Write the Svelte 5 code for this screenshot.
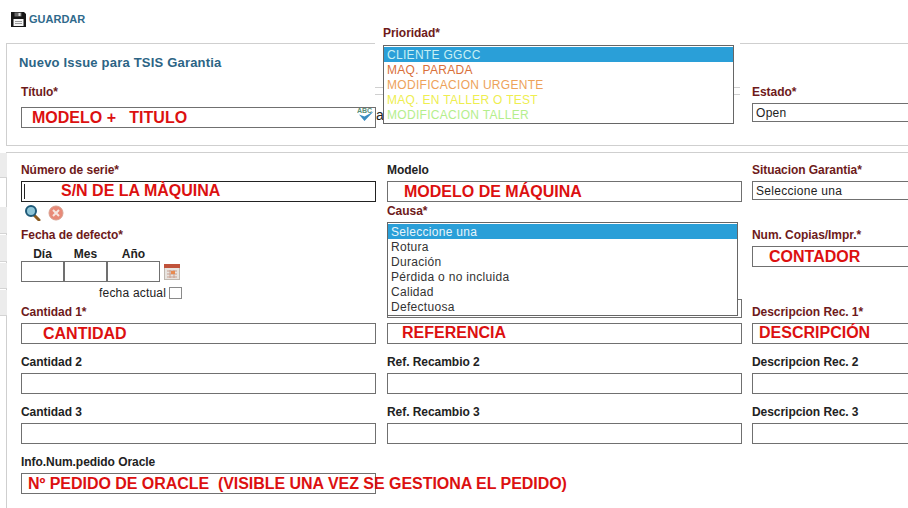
<script>
	const causas = ['Seleccione una', 'Rotura', 'Duración', 'Pérdida o no incluida', 'Calidad', 'Defectuosa'];
	const prioridades = [
		{ name: 'CLIENTE GGCC', color: '#c8f0f4' },
		{ name: 'MAQ. PARADA', color: '#d9703a' },
		{ name: 'MODIFICACION URGENTE', color: '#eda25a' },
		{ name: 'MAQ. EN TALLER O TEST', color: '#eeee50' },
		{ name: 'MODIFICACION TALLER', color: '#b4ee8c' }
	];
	const extras = [
		['Cantidad 2', 'Ref. Recambio 2', 'Descripcion Rec. 2'],
		['Cantidad 3', 'Ref. Recambio 3', 'Descripcion Rec. 3']
	];
</script>

<div class="page">
	<div class="toolbar">
		<svg width="15" height="15" viewBox="0 0 15 15">
			<path d="M0 0h13l2 2v13H0z" fill="#161616" />
			<rect x="3.500" y="0.500" width="7" height="4" fill="#666" />
			<rect x="7.500" y="1" width="2" height="3" fill="#ddd" />
			<rect x="2.500" y="7" width="10" height="7" fill="#f4f4f4" />
			<path d="M4 9.500h7M4 11.500h7" stroke="#999" />
		</svg>
		<span>GUARDAR</span>
	</div>

	<div class="panel top">
		<h2>Nuevo Issue para TSIS Garantia</h2>
		<div class="grid">
			<div class="col">
				<span class="lbl req">Título*</span>
				<div class="box note titulo"><b class="n1">MODELO + &nbsp; TITULO</b></div>
				<div class="spell">
					<svg width="17" height="15" viewBox="0 0 17 15">
						<text x="0" y="6" font-size="7" font-weight="700" font-family="Liberation Sans" fill="#5c9078">ABC</text>
						<path d="M2 7.500l5.500 6.500 9-9.500-9 5z" fill="#3a8cc0" />
					</svg>
					<span>a</span>
				</div>
			</div>
			<div></div>
			<div class="col">
				<span class="lbl req">Estado*</span>
				<div class="box sel">Open</div>
			</div>
		</div>
		<i class="mid-lines"></i>
		<div class="prio-pop">
			<span class="lbl req high">Prioridad*</span>
			<ul class="list prio">
				{#each prioridades as p, i}
					<li class:on={i === 0} style="color: {p.color}">{p.name}</li>
				{/each}
			</ul>
		</div>
	</div>

	<div class="panel main">
		<div class="grid first">
			<div class="col">
				<span class="lbl req high">Número de serie*</span>
				<div class="box dark note"><i class="caret"></i><b class="n2">S/N DE LA MÀQUINA</b></div>
				<div class="icons">
					<svg width="18" height="16" viewBox="0 0 18 16">
						<path d="M10 10l5 5" stroke="#8a5a20" stroke-width="3" stroke-linecap="round" />
						<circle cx="7" cy="6" r="5" fill="#8fc6d8" stroke="#1f5a78" stroke-width="2" />
					</svg>
					<svg width="16" height="16" viewBox="0 0 16 16">
						<circle cx="8" cy="8" r="7" fill="#e88a78" stroke="#d9a090" />
						<path d="M5 5l6 6M11 5l-6 6" stroke="#f6e6e0" stroke-width="2" />
					</svg>
				</div>
				<span class="lbl req fecha">Fecha de defecto*</span>
				<div class="date-heads">
					<span>Día</span><span>Mes</span><span>Año</span>
				</div>
				<div class="date-row">
					<div class="box d1"></div>
					<div class="box d2"></div>
					<div class="box d3"></div>
					<svg width="16" height="16" viewBox="0 0 16 16">
						<rect x="0.500" y="0.500" width="15" height="15" fill="#e8e4e0" stroke="#c0b8b0" />
						<rect width="16" height="4" fill="#c0523a" />
						<path d="M3 7h10M3 10h10M3 13h10M6 6v8M10 6v8" stroke="#c9a090" />
						<rect x="7" y="7" width="4" height="3" fill="#e88a50" />
					</svg>
				</div>
				<div class="today"><span>fecha actual</span><i class="check"></i></div>
			</div>
			<div class="col">
				<span class="lbl high">Modelo</span>
				<div class="box note"><b class="n3">MODELO DE MÁQUINA</b></div>
				<span class="lbl req high causa">Causa*</span>
				<ul class="list causas">
					{#each causas as c, i}
						<li class:on={i === 0}>{c}</li>
					{/each}
				</ul>
				<i class="box behind"></i>
			</div>
			<div class="col">
				<span class="lbl req high">Situacion Garantia*</span>
				<div class="box sel sit">Seleccione una</div>
				<span class="lbl req copias">Num. Copias/Impr.*</span>
				<div class="box note gap4"><b class="n4">CONTADOR</b></div>
			</div>
		</div>

		<div class="grid">
			<div class="col">
				<span class="lbl req">Cantidad 1*</span>
				<div class="box note gap4"><b class="n5">CANTIDAD</b></div>
			</div>
			<div class="col">
				<span class="lbl req">&nbsp;</span>
				<div class="box note gap4"><b class="n6">REFERENCIA</b></div>
			</div>
			<div class="col">
				<span class="lbl req">Descripcion Rec. 1*</span>
				<div class="box note gap4"><b class="n7">DESCRIPCIÓN</b></div>
			</div>
		</div>

		{#each extras as row}
			<div class="grid row-n">
				{#each row as label}
					<div class="col">
						<span class="lbl">{label}</span>
						<div class="box gap4"></div>
					</div>
				{/each}
			</div>
		{/each}

		<div class="grid row-n">
			<div class="col">
				<span class="lbl">Info.Num.pedido Oracle</span>
				<div class="box note gap4"><b class="n8">Nº PEDIDO DE ORACLE &nbsp;(VISIBLE UNA VEZ SE GESTIONA EL PEDIDO)</b></div>
			</div>
		</div>
	</div>

	<div class="tabs">
		<i class="t1"></i><i class="t2"></i><i class="t3"></i><i class="t4"></i><i class="t5"></i>
	</div>
</div>

<style>
	:global(body) {
		margin: 0;
		background: #fff;
		overflow: hidden;
	}

	.page {
		position: relative;
		width: 908px;
		height: 508px;
		overflow: hidden;
		font-family: 'Liberation Sans', Arial, sans-serif;
		font-size: 12px;
		color: #222;
	}

	.toolbar {
		display: flex;
		align-items: center;
		gap: 3px;
		height: 16px;
		padding: 11px 0 0 11px;
		color: #2f6a8c;
		font-size: 11px;
		font-weight: 700;
	}

	.panel {
		position: relative;
		box-sizing: border-box;
		margin-left: 6px;
		width: 960px;
		border: 1px solid #cfcfcf;
		border-right: 0;
		padding-left: 14px;
	}

	.top {
		height: 103px;
		margin-top: 16px;
	}

	.top h2 {
		margin: 0 0 0 -2px;
		padding-top: 11px;
		height: 28px;
		color: #2c6485;
		font-size: 13px;
		font-weight: 700;
		letter-spacing: 0.2px;
	}

	.main {
		margin-top: 6px;
		height: 400px;
		border-bottom: 0;
		padding-top: 9px;
	}

	.grid {
		display: grid;
		grid-template-columns: 366px 365px 200px;
	}

	.first {
		height: 141px;
	}

	.row-n {
		margin-top: 9px;
	}

	.col {
		position: relative;
		display: flex;
		flex-direction: column;
		align-items: flex-start;
	}

	.lbl {
		display: block;
		font-size: 12px;
		line-height: 18px;
		height: 16px;
		font-weight: 700;
		color: #222;
		letter-spacing: -0.05px;
	}

	.high {
		line-height: 16px;
	}

	.req {
		color: #6e1a1a;
	}

	.box {
		box-sizing: border-box;
		width: 355px;
		height: 21px;
		margin-top: 3px;
		border: 1px solid #707070;
		background: #fff;
		flex: none;
	}

	.gap4 {
		margin-top: 4px;
	}

	.titulo {
		margin-top: 8px;
	}

	.dark {
		border-color: #222;
	}

	.sel {
		height: 19px;
		margin-top: 4px;
		padding-left: 3px;
		font-size: 12px;
		line-height: 19px;
		letter-spacing: 0.3px;
	}

	.sit {
		margin-top: 3px;
	}

	.note {
		position: relative;
	}

	.note b {
		position: absolute;
		top: 0;
		color: #dc1010;
		font-size: 16px;
		line-height: 19px;
		white-space: nowrap;
	}

	.note .n1 { left: 10px; }
	.note .n2 { left: 39px; top: -1px; }
	.note .n3 { left: 16px; }
	.note .n4 { left: 16px; }
	.note .n5 { left: 21px; }
	.note .n6 { left: 14px; top: -1px; }
	.note .n7 { left: 6px; top: -1px; }
	.note .n8 { left: 6px; letter-spacing: -0.04px; }

	.caret {
		position: absolute;
		left: 2px;
		top: 2px;
		width: 1px;
		height: 15px;
		background: #222;
	}

	.spell {
		position: absolute;
		left: 336px;
		top: 21px;
		display: flex;
		align-items: center;
		gap: 2px;
		font-size: 14px;
		height: 21px;
	}

	.mid-lines {
		position: absolute;
		left: 368px;
		top: 43px;
		box-sizing: border-box;
		width: 365px;
		height: 8px;
		border-top: 1px solid #d0d0d0;
		border-bottom: 1px solid #d0d0d0;
	}

	.prio-pop {
		position: absolute;
		left: 368px;
		top: -19px;
		z-index: 2;
		width: 357px;
		height: 30px;
		padding-left: 8px;
		background: #fff;
	}

	.list {
		list-style: none;
		margin: 0;
		padding: 1px 0 0;
		box-sizing: border-box;
		background: #fff;
		border: 1px solid #666;
		font-size: 12px;
		letter-spacing: 0.3px;
	}

	.list li {
		padding-left: 3px;
		height: 15px;
		line-height: 17px;
	}

	.list li.on {
		background: #2a9fd8;
	}

	.prio {
		width: 351px;
		height: 79px;
		margin-top: 4px;
	}

	.causa {
		margin-top: 1px;
	}

	.causas {
		position: relative;
		z-index: 2;
		width: 351px;
		height: 94px;
		margin-top: 3px;
		color: #333;
	}

	.causas li.on {
		color: #e8f4fa;
	}

	.behind {
		position: absolute;
		left: 0;
		top: 137px;
		height: 19px;
		margin: 0;
	}

	.icons {
		display: flex;
		align-items: center;
		gap: 6px;
		margin: 3px 0 0 3px;
		height: 16px;
	}

	.fecha {
		margin-top: 5px;
	}

	.date-heads {
		display: flex;
		height: 15px;
		margin-top: 4px;
		font-weight: 700;
		line-height: 17px;
	}

	.date-heads span {
		text-align: center;
		width: 43px;
	}

	.date-heads span:last-child {
		width: 53px;
	}

	.date-row {
		display: flex;
		align-items: flex-end;
	}

	.date-row svg {
		margin: 0 0 2px 4px;
	}

	.date-row .box {
		margin-top: 0;
	}

	.date-row .d1,
	.date-row .d2 {
		width: 43px;
	}

	.date-row .d3 {
		width: 53px;
	}

	.today {
		display: flex;
		align-items: center;
		gap: 3px;
		margin: 4px 0 0 78px;
		height: 14px;
		letter-spacing: 0.2px;
	}

	.check {
		box-sizing: border-box;
		width: 13px;
		height: 12px;
		border: 1px solid #8a8a8a;
	}

	.copias {
		margin-top: 26px;
	}

	.tabs i {
		position: absolute;
		left: 0;
		box-sizing: border-box;
		width: 7px;
		background: #ececec;
		border-bottom: 1px solid #d4d4d4;
	}

	.tabs .t1 { top: 153px; height: 25px; }
	.tabs .t2 { top: 207px; height: 27px; }
	.tabs .t3 { top: 235px; height: 27px; }
	.tabs .t4 { top: 263px; height: 26px; }
	.tabs .t5 { top: 290px; height: 26px; }
</style>
